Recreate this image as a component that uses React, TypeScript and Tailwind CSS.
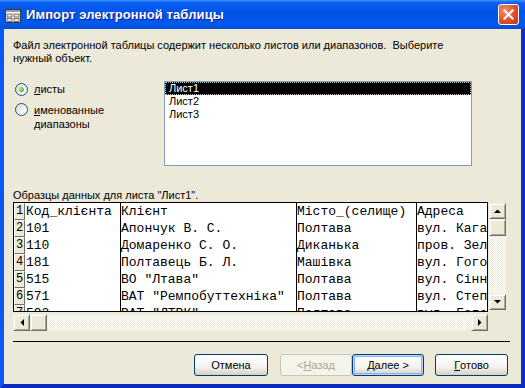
import React from 'react';

const rows = [
  ['1', 'Код_клієнта', 'Клієнт', 'Місто_(селище)', 'Адреса'],
  ['2', '101', 'Апончук В. С.', 'Полтава', 'вул. Кагамлика'],
  ['3', '110', 'Домаренко С. О.', 'Диканька', 'пров. Зелений'],
  ['4', '181', 'Полтавець Б. Л.', 'Машівка', 'вул. Гоголя'],
  ['5', '515', 'ВО "Лтава"', 'Полтава', 'вул. Сінна'],
  ['6', '571', 'ВАТ "Ремпобуттехніка"', 'Полтава', 'вул. Степового'],
  ['7', '593', 'ВАТ "ЛТРК"', 'Полтава', 'вул. Гоголя'],
];

const ui = "font-['Liberation_Sans',Arial,sans-serif]";
const mono = "font-['Liberation_Mono','Courier_New',monospace]";

function Arrow({ dir }: { dir: 'up' | 'down' | 'left' | 'right' }) {
  const pts = {
    up: '0,4 7,4 3.5,0.5',
    down: '0,0 7,0 3.5,3.5',
    left: '4,0 4,7 0.5,3.5',
    right: '0,0 0,7 3.5,3.5',
  }[dir];
  const vertical = dir === 'up' || dir === 'down';
  return (
    <svg width={vertical ? 7 : 4} height={vertical ? 4 : 7} viewBox={vertical ? '0 0 7 4' : '0 0 4 7'}>
      <polygon points={pts} fill="#000" />
    </svg>
  );
}

function ScrollBtn({ dir, className = '' }: { dir?: 'up' | 'down' | 'left' | 'right'; className?: string }) {
  return (
    <div
      className={`flex items-center justify-center bg-[#ece9d8] border border-t-[#f1efe2] border-l-[#f1efe2] border-r-[#716f64] border-b-[#716f64] shadow-[inset_1px_1px_0_#ffffff,inset_-1px_-1px_0_#aca899] ${className}`}
    >
      {dir && <Arrow dir={dir} />}
    </div>
  );
}

const track =
  'bg-[repeating-conic-gradient(#ffffff_0%_25%,#ece9d8_0%_50%)] bg-[length:2px_2px]';

function Radio({ checked }: { checked?: boolean }) {
  return (
    <div className="w-[13px] h-[13px] shrink-0 rounded-full border border-[#1c5180] bg-[linear-gradient(135deg,#dcd9cb_0%,#ffffff_90%)] flex items-center justify-center">
      {checked && <div className="w-[5px] h-[5px] rounded-full bg-[radial-gradient(circle_at_35%_35%,#a6ef8c,#21a121)]" />}
    </div>
  );
}

function XpButton({
  children,
  className = '',
  disabled,
  isDefault,
}: {
  children: React.ReactNode;
  className?: string;
  disabled?: boolean;
  isDefault?: boolean;
}) {
  if (disabled) {
    return (
      <div className={`h-[22px] rounded-[3px] border border-[#c9c7ba] bg-[#f5f4ea] text-[#aca899] flex items-center justify-center text-[11px] ${className}`}>
        {children}
      </div>
    );
  }
  return (
    <div
      className={`h-[22px] rounded-[3px] border border-[#003c74] bg-[linear-gradient(180deg,#ffffff_0%,#f4f3ee_60%,#d6d0c5_100%)] text-black flex items-center justify-center text-[11px] ${
        isDefault ? 'shadow-[inset_0_0_0_1px_#c1d3fb,inset_0_0_0_2px_#88adf2]' : ''
      } ${className}`}
    >
      {children}
    </div>
  );
}

export default function App() {
  return (
    <div className={`w-[525px] h-[388px] flex flex-col bg-[#0054e3] ${ui}`}>
      {/* Title bar */}
      <div className="h-[29px] shrink-0 flex items-center bg-[linear-gradient(180deg,#3d95ff_0%,#0a5ef4_10%,#0054e3_45%,#0058ee_80%,#0050d8_100%)] pl-[5px] pr-[6px]">
        <svg width="16" height="14" viewBox="0 0 16 14" className="shrink-0 mt-[2px]">
          <rect x="0.5" y="0.5" width="15" height="13" fill="#ffffff" stroke="#3b3b3b" />
          <rect x="1" y="1" width="14" height="2" fill="#9a9a9a" />
          <rect x="2" y="5" width="5" height="3" fill="#e8e8e8" stroke="#555" strokeWidth="0.8" />
          <rect x="9" y="5" width="5" height="3" fill="#e8e8e8" stroke="#555" strokeWidth="0.8" />
          <rect x="2" y="9.5" width="5" height="3" fill="#e8e8e8" stroke="#555" strokeWidth="0.8" />
          <rect x="9" y="9.5" width="5" height="3" fill="#e8e8e8" stroke="#555" strokeWidth="0.8" />
        </svg>
        <span className="ml-[5px] text-white font-bold text-[13px] [text-shadow:1px_1px_0_#0f1f8c] tracking-[0.1px]">
          Импорт электронной таблицы
        </span>
        <div className="ml-auto w-[21px] h-[21px] rounded-[3px] border border-white bg-[radial-gradient(circle_at_30%_30%,#f28d6c,#e04a25_60%,#c1350f)] flex items-center justify-center">
          <svg width="11" height="11" viewBox="0 0 11 11">
            <path d="M1.5 1.5 L9.5 9.5 M9.5 1.5 L1.5 9.5" stroke="#ffffff" strokeWidth="2.2" strokeLinecap="square" />
          </svg>
        </div>
      </div>

      {/* Body */}
      <div className="flex-1 flex flex-col bg-[#ece9d8] border-l-4 border-r-4 border-b-4 border-l-[#0a56f0] border-r-[#0b2fc4] border-b-[#0b2cbf] pl-[9px] text-[11px] text-black">
        <p className="mt-[10px] leading-[13px]">
          Файл электронной таблицы содержит несколько листов или диапазонов.{'\u00a0\u00a0'}Выберите
          <br />
          нужный объект.
        </p>

        <div className="mt-[16px] flex">
          <div className="ml-[2px] w-[149px] pt-[2px] flex flex-col gap-[7px]">
            <div className="flex items-start gap-[6px]">
              <Radio checked />
              <span className="leading-[13px]">
                <u>л</u>исты
              </span>
            </div>
            <div className="flex items-start gap-[6px]">
              <Radio />
              <span className="leading-[14px]">
                <u>и</u>менованные
                <br />
                диапазоны
              </span>
            </div>
          </div>
          <div className="w-[308px] h-[85px] border border-[#7f9db9] bg-white">
            <div className="h-[13px] leading-[11px] bg-black text-white border border-dotted border-[#bdbdbd] pl-[3px]">Лист1</div>
            <div className="h-[13px] leading-[13px] pl-[4px]">Лист2</div>
            <div className="h-[13px] leading-[13px] pl-[4px]">Лист3</div>
          </div>
        </div>

        <div className="mt-[23px] leading-[13px]">Образцы данных для листа "Лист1".</div>

        {/* Data grid */}
        <div className="flex">
          <div className="w-[475px] flex flex-col">
            <div className={`h-[110px] border border-black bg-white overflow-hidden ${mono} text-[13px]`}>
              {rows.map((r) => (
                <div key={r[0]} className="flex h-[17px] shrink-0">
                  <div className="w-[11px] h-[17px] shrink-0 bg-[#ece9d8] border border-t-white border-l-white border-r-[#716f64] border-b-[#716f64] leading-[15px] text-center text-[12px]">
                    {r[0]}
                  </div>
                  <div className="w-[96px] shrink-0 border-r border-black leading-[17px] pl-[1px] whitespace-pre overflow-hidden">{r[1]}</div>
                  <div className="w-[176px] shrink-0 border-r border-black leading-[17px] whitespace-pre overflow-hidden">{r[2]}</div>
                  <div className="w-[120px] shrink-0 border-r border-black leading-[17px] whitespace-pre overflow-hidden">{r[3]}</div>
                  <div className="w-[70px] shrink-0 leading-[17px] whitespace-pre overflow-hidden">{r[4]}</div>
                </div>
              ))}
            </div>
            <div className={`mt-[2px] h-[17px] flex ${track}`}>
              <ScrollBtn dir="left" className="w-[17px] h-[17px]" />
              <ScrollBtn className="w-[17px] h-[17px]" />
              <div className="flex-1" />
              <ScrollBtn dir="right" className="w-[17px] h-[17px]" />
            </div>
          </div>
          <div className={`ml-[1px] mt-[1px] w-[17px] h-[107px] flex flex-col ${track}`}>
            <ScrollBtn dir="up" className="w-[17px] h-[16px]" />
            <ScrollBtn className="w-[17px] h-[17px]" />
            <div className="flex-1" />
            <ScrollBtn dir="down" className="w-[17px] h-[16px]" />
          </div>
        </div>

        <div className="mt-[10px] w-[497px] h-px bg-black" />

        <div className="mt-[12px] flex">
          <XpButton className="ml-[181px] w-[74px]">Отмена</XpButton>
          <XpButton disabled className="ml-[12px] w-[72px]">
            &lt; <u>Н</u>азад
          </XpButton>
          <XpButton isDefault className="w-[72px]">
            <u>Д</u>алее &gt;
          </XpButton>
          <XpButton className="ml-[11px] w-[73px]">
            <u>Г</u>отово
          </XpButton>
        </div>
      </div>
    </div>
  );
}
